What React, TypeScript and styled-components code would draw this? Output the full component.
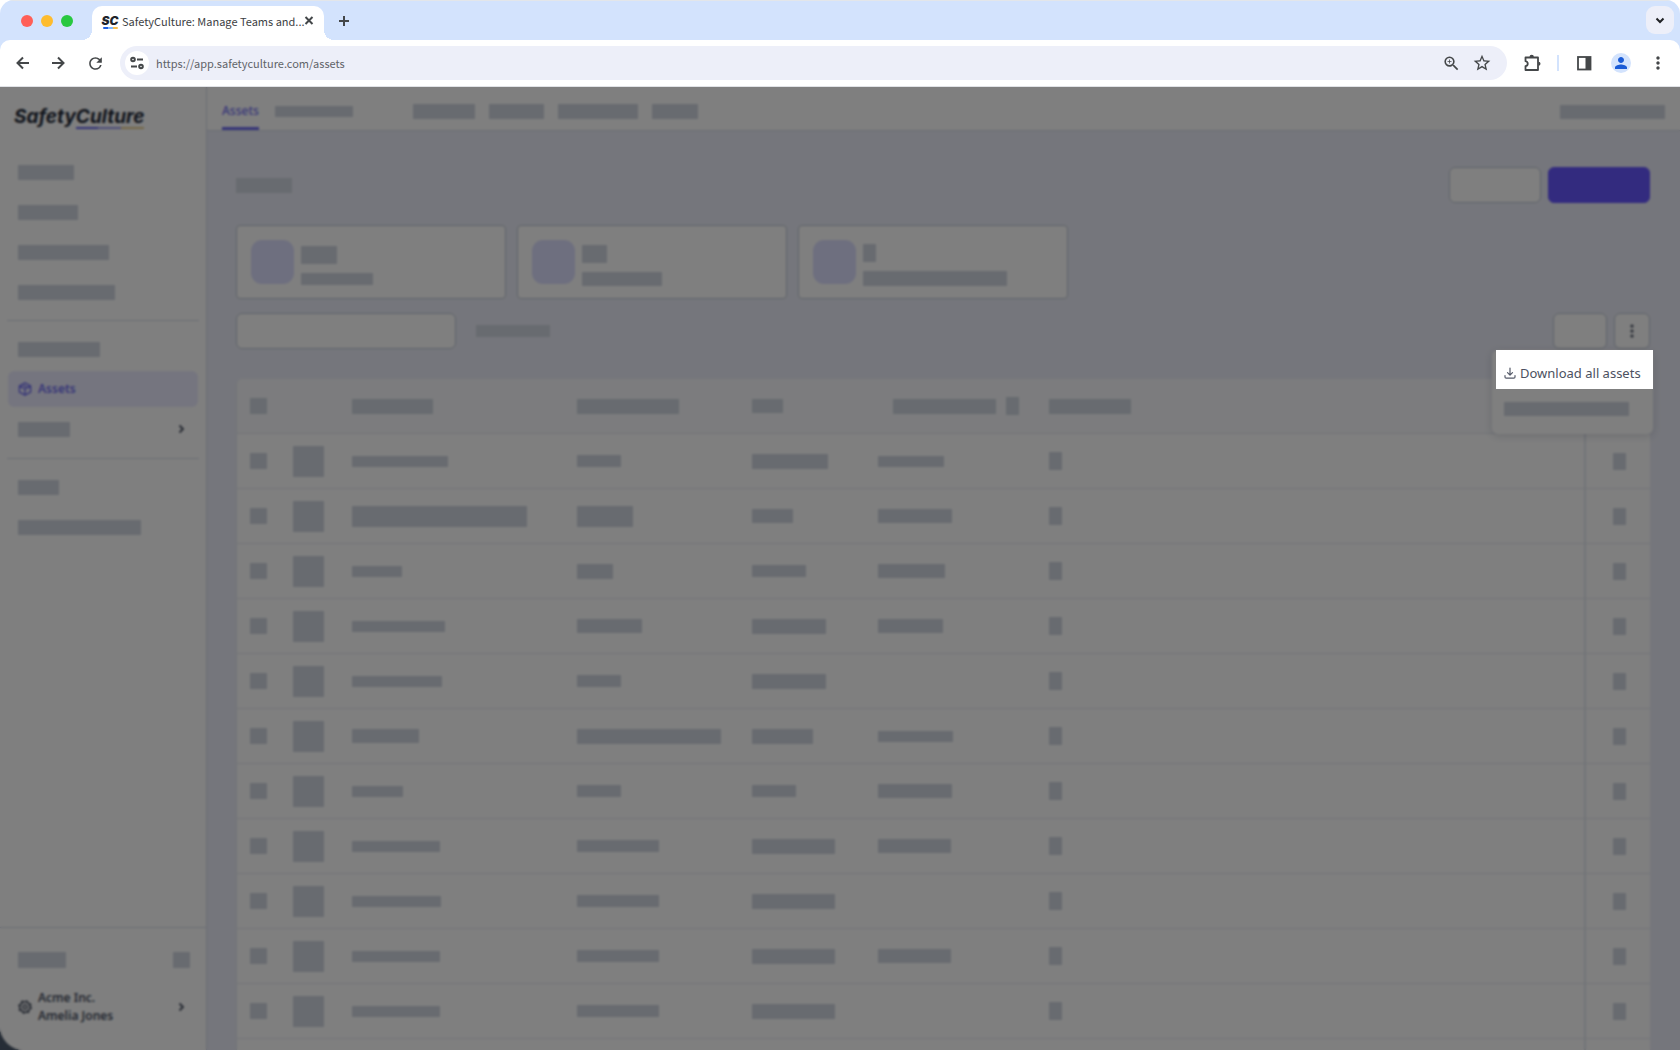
import React from "react";
import styled, { createGlobalStyle } from "styled-components";
import { MdRefresh, MdZoomIn, MdStarOutline, MdMoreVert, MdPerson } from "react-icons/md";

const color = {
  strip: "#d3e3fd",
  omnibox: "#edeff9",
  ink: "#444749",
  canvas: "#ebedf8",
  bar: "#d0d6e0",
  line: "#e4e8f0",
  edge: "#d6dbe8",
  outline: "#bec6d4",
  accent: "#6656ff",
  accentText: "#6e6cf0",
  tile: "#dcdefe",
  text: "#4a5263",
};

const GlobalStyle = createGlobalStyle`
  *, *::before, *::after { box-sizing: border-box; }
  body { margin: 0; background: #fff; overflow: hidden; }
  button, input { font: inherit; margin: 0; padding: 0; border: 0; }
  svg { display: block; flex: none; }
`;

const Window = styled.div`
  display: flex;
  flex-direction: column;
  height: 100vh;
  border-radius: 14px 14px 0 0;
  overflow: hidden;
  background: ${color.strip};
  font-family: "Noto Sans", sans-serif;
`;

/* Browser frame */

const TabStrip = styled.header`
  display: flex;
  align-items: flex-end;
  height: 40px;
  flex: none;
  padding: 0 6px 0 21px;
  border-top: 1px solid #e3e6ea;
`;

const Lights = styled.div`
  display: flex;
  gap: 8px;
  padding-bottom: 13px;
`;

const Light = styled.span<{ $fill: string }>`
  width: 12px;
  height: 12px;
  border-radius: 50%;
  background: ${(p) => p.$fill};
`;

const Tab = styled.div`
  position: relative;
  display: flex;
  align-items: center;
  width: 232px;
  height: 34px;
  margin-left: 19px;
  padding: 0 9px 4px 10px;
  border-radius: 10px 10px 0 0;
  background: #fff;

  &::before,
  &::after {
    content: "";
    position: absolute;
    bottom: 0;
    width: 10px;
    height: 10px;
  }
  &::before {
    right: 100%;
    background: radial-gradient(circle at 0 0, transparent 10px, #fff 10px);
  }
  &::after {
    left: 100%;
    background: radial-gradient(circle at 100% 0, transparent 10px, #fff 10px);
  }
`;

const Favicon = styled.span`
  display: flex;
  flex-direction: column;
  align-items: center;
  width: 16px;
  margin-top: 2px;
  font: italic 900 12px/12px Inter, sans-serif;
  color: #20242b;

  &::after {
    content: "";
    width: 15px;
    height: 2px;
    border-radius: 1px;
    background: linear-gradient(90deg, #1f5fe0 0 35%, #7fb8ff 35% 65%, #f5bd4f 65%);
  }
`;

const TabTitle = styled.span`
  flex: 1;
  min-width: 0;
  margin-left: 4px;
  font: 11px/16px "Noto Sans CJK JP", "Noto Sans", sans-serif;
  color: #3c4043;
  white-space: nowrap;
`;

const IconButton = styled.button<{ $size?: number }>`
  display: grid;
  place-items: center;
  flex: none;
  width: ${(p) => p.$size ?? 24}px;
  height: ${(p) => p.$size ?? 24}px;
  background: none;
  color: ${color.ink};
`;

const NewTab = styled(IconButton)`
  margin: 0 auto 7px 8px;
`;

const TabSearch = styled(IconButton)`
  margin-bottom: 6px;
  border-radius: 9px;
  background: ${color.omnibox};
  color: #202124;
`;

const Toolbar = styled.div`
  display: flex;
  align-items: center;
  gap: 13px;
  flex: none;
  height: 47px;
  padding: 0 10px 0 11px;
  border-radius: 10px 10px 0 0;
  border-bottom: 1px solid #e0e2e6;
  background: #fff;
`;

const History = styled.div`
  display: flex;
  gap: 12px;
`;

const Omnibox = styled.form`
  display: flex;
  align-items: center;
  gap: 7px;
  flex: 1;
  height: 34px;
  padding: 0 13px 0 5px;
  border-radius: 17px;
  background: ${color.omnibox};
`;

const SiteInfo = styled(IconButton)`
  border-radius: 50%;
  background: #fff;
`;

const Address = styled.input`
  flex: 1;
  min-width: 0;
  background: none;
  font: 11px/18px "Noto Sans CJK JP", "Noto Sans", sans-serif;
  color: #5f6368;
  outline: none;
`;

const ToolbarRule = styled.span`
  width: 2px;
  height: 16px;
  background: ${color.strip};
`;

const Profile = styled(IconButton)`
  margin: 0 2px;
  border-radius: 50%;
  background: ${color.strip};
  color: #1a5bd6;
`;

/* Application */

const Stage = styled.div`
  position: relative;
  flex: 1;
  min-height: 0;
  overflow: hidden;
  background: #4c5a6c;
`;

const AppFrame = styled.div`
  display: grid;
  grid-template-columns: 206px 1fr;
  grid-template-rows: minmax(0, 1fr);
  height: 100%;
  overflow: hidden;
  border-bottom-left-radius: 24px;
  background: ${color.canvas};
`;

const Dimmer = styled.div`
  position: absolute;
  inset: 0;
  z-index: 1;
  background: rgba(0, 0, 0, 0.5);
  backdrop-filter: blur(1px);
  pointer-events: none;
`;

const Bar = styled.span<{ $w: number; $h?: number }>`
  display: block;
  flex: none;
  width: ${(p) => p.$w}px;
  height: ${(p) => p.$h ?? 15}px;
  background: ${color.bar};
`;

const Sidebar = styled.aside`
  display: flex;
  flex-direction: column;
  min-height: 0;
  background: #fff;
`;

const Brand = styled.a`
  display: flex;
  flex-direction: column;
  align-items: flex-end;
  align-self: flex-start;
  height: 63px;
  padding: 19px 0 0 14px;
  font: italic 700 19px/21px Inter, sans-serif;
  color: #232a38;
  text-decoration: none;

  &::after {
    content: "";
    width: 68px;
    height: 2px;
    background: linear-gradient(90deg, #6262e8 0 32%, #9b9bf0 32% 66%, #e8cf8c 66%);
  }
`;

const NavGroup = styled.nav`
  display: flex;
  flex-direction: column;
  gap: 4px;
  padding: 4px 8px 10px;
  & + & {
    margin: 0 7px;
    padding: 10px 1px 11px;
    border-top: 1px solid ${color.edge};
  }
`;

const NavItem = styled.a<{ $active?: boolean }>`
  display: flex;
  align-items: center;
  gap: 6px;
  height: 36px;
  padding: 0 10px;
  border-radius: 6px;
  background: ${(p) => (p.$active ? "#ebebfe" : "none")};
  font-size: 12px;
  font-weight: 600;
  line-height: 18px;
  color: ${(p) => (p.$active ? color.accentText : color.text)};
  text-decoration: none;

  & > svg:last-child:not(:first-child) {
    margin-left: auto;
  }
`;

const Footer = styled.footer`
  flex: none;
  margin-top: auto;
  height: 123px;
  padding: 14px 8px 0;
  border-top: 1px solid ${color.edge};
`;

const FooterRow = styled.div`
  display: flex;
  align-items: center;
  justify-content: space-between;
  height: 36px;
  padding: 0 8px 0 10px;
`;

const Account = styled.button`
  display: flex;
  align-items: center;
  gap: 6px;
  width: 100%;
  height: 58px;
  padding: 0 10px;
  background: none;
  font-size: 12px;
  font-weight: 600;
  line-height: 18px;
  color: ${color.text};
  text-align: left;

  & > svg:last-child {
    margin-left: auto;
  }
`;

const Main = styled.main`
  min-width: 0;
  border-left: 1px solid ${color.edge};
`;

const TopBar = styled.div`
  display: flex;
  align-items: center;
  height: 44px;
  padding: 6px 15px 0 15px;
  border-bottom: 1px solid ${color.edge};
  background: #fff;
`;

const TopTab = styled.a`
  display: flex;
  align-items: center;
  align-self: stretch;
  margin-right: 16px;
  border-bottom: 3px solid ${color.accentText};
  font-size: 12px;
  font-weight: 500;
  color: ${color.accentText};
  text-decoration: none;
`;

const TopLinks = styled.div`
  display: flex;
  gap: 14px;
  margin: 0 auto 0 60px;
`;

const Content = styled.div`
  padding: 36px 30px 0 29px;
`;

const Heading = styled.div`
  display: flex;
  align-items: center;
  justify-content: space-between;
`;

const Actions = styled.div`
  display: flex;
  gap: 7px;
`;

const Action = styled.button<{ $w: number; $primary?: boolean }>`
  display: grid;
  place-items: center;
  width: ${(p) => p.$w}px;
  height: 36px;
  border: 1px solid ${(p) => (p.$primary ? color.accent : color.outline)};
  border-radius: 6px;
  background: ${(p) => (p.$primary ? color.accent : "#fff")};
  color: ${color.text};
`;

const Cards = styled.div`
  display: flex;
  gap: 11px;
  margin-top: 22px;
`;

const Card = styled.section`
  display: flex;
  align-items: center;
  gap: 7px;
  width: 270px;
  height: 74px;
  padding: 0 14px;
  border: 1px solid ${color.outline};
  border-radius: 4px;
  background: #fff;
`;

const CardTile = styled.span`
  width: 43px;
  height: 44px;
  border-radius: 11px;
  background: ${color.tile};
`;

const CardLines = styled.div`
  display: grid;
  gap: 9px;
  padding-top: 6px;
`;

const Filters = styled.div`
  display: flex;
  align-items: center;
  gap: 20px;
  margin-top: 14px;
`;

const Search = styled.input`
  width: 220px;
  height: 36px;
  border: 1px solid ${color.outline};
  border-radius: 6px;
  background: #fff;
`;

const FilterActions = styled(Actions)`
  position: relative;
  margin-left: auto;
`;

const Menu = styled.div`
  position: absolute;
  top: 37px;
  right: -3px;
  width: 161px;
  border-radius: 6px;
  background: #fff;
  box-shadow: 0 2px 8px rgba(40, 50, 80, 0.18);
`;

const MenuSpotlight = styled.button`
  position: relative;
  z-index: 2;
  display: flex;
  align-items: center;
  gap: 4px;
  width: 157px;
  height: 39px;
  margin-left: 4px;
  padding: 7px 0 0 8px;
  background: #fff;
  font-size: 13px;
  line-height: 18px;
  color: #4c5160;
  white-space: nowrap;
`;

const MenuRow = styled.div`
  padding: 13px 12px 18px;
`;

const Assets = styled.table`
  width: 100%;
  margin-top: 30px;
  border-spacing: 0;
  table-layout: fixed;
  border-left: 1px solid ${color.line};
  border-radius: 6px 6px 0 0;
  background: #fff;
`;

const Col = styled.col<{ $w?: number }>`
  width: ${(p) => (p.$w ? `${p.$w}px` : "auto")};
`;

const HeadCell = styled.th<{ $pad?: number }>`
  height: 55px;
  padding: 0 0 0 ${(p) => p.$pad ?? 0}px;
  border-bottom: 1px solid ${color.line};
  background: #f8f9fc;
  &:first-child {
    border-top-left-radius: 6px;
  }
`;

const Cell = styled.td<{ $pad?: number; $pinned?: boolean }>`
  height: 55px;
  padding: 0 0 0 ${(p) => p.$pad ?? 0}px;
  border-bottom: 1px solid ${color.line};
  border-left: ${(p) => (p.$pinned ? `2px solid ${color.line}` : "0")};
`;

const Inline = styled.div`
  display: flex;
  align-items: center;
  gap: 10px;
`;

type Size = [number, number];

const rows: (Size | null)[][] = [
  [[96, 11], [44, 12], [76, 15], [66, 11]],
  [[175, 21], [56, 21], [41, 14], [74, 14]],
  [[50, 11], [36, 15], [54, 12], [67, 14]],
  [[93, 11], [65, 14], [74, 15], [65, 14]],
  [[90, 11], [44, 12], [74, 15], null],
  [[67, 14], [144, 15], [61, 15], [75, 11]],
  [[51, 11], [44, 12], [44, 12], [74, 14]],
  [[88, 11], [82, 12], [83, 15], [73, 14]],
  [[89, 11], [82, 12], [83, 15], null],
  [[88, 11], [82, 12], [83, 15], [73, 14]],
  [[88, 11], [82, 12], [83, 15], null],
];

const cards: [Size, Size][] = [
  [[36, 18], [72, 12]],
  [[25, 18], [80, 14]],
  [[13, 18], [144, 15]],
];

const Glyph = ({ d, size = 18, width = 2 }: { d: string; size?: number; width?: number }) => (
  <svg width={size} height={size} viewBox={`0 0 ${size} ${size}`} fill="none" stroke="currentColor" strokeWidth={width}>
    <path d={d} />
  </svg>
);

const SettingsGlyph = () => (
  <svg width="14" height="14" viewBox="0 0 14 14" fill="none" stroke={color.ink} strokeWidth="2">
    <circle cx="3" cy="3.5" r="1.8" />
    <path d="M7 3.500h6M1 10.500h6" />
    <circle cx="11" cy="10.500" r="1.8" />
  </svg>
);

const PuzzleGlyph = () => (
  <svg width="20" height="20" viewBox="0 0 20 20">
    <path d="M3.500 4.500h12.500v12.500H3.500v-3.800c3-.6 3-4.400 0-5z" fill="none" stroke={color.ink} strokeWidth="1.800" strokeLinejoin="round" />
    <path d="M7.500 4a2.200 2.200 0 0 1 4.400 0zM16.500 8.800a2 2 0 0 1 0 4z" fill={color.ink} />
  </svg>
);

const PanelGlyph = () => (
  <svg width="16" height="16" viewBox="0 0 16 16">
    <rect x="2" y="2" width="12.500" height="12.500" fill="none" stroke={color.ink} strokeWidth="1.800" />
    <path d="M9.500 2h5v12.500h-5z" fill={color.ink} />
  </svg>
);

const CubeGlyph = () => (
  <svg width="14" height="14" viewBox="0 0 14 14" fill="none" stroke={color.accentText} strokeWidth="1.400" strokeLinejoin="round">
    <path d="M7 .8l5.600 3v6.400L7 13.200l-5.600-3V3.800zM1.400 3.800L7 7l5.600-3.200M7 7v6.200M4 2.400l5.800 3.200" />
  </svg>
);

const GearGlyph = () => (
  <svg width="14" height="14" viewBox="0 0 14 14" fill="none" stroke={color.text}>
    <circle cx="7" cy="7" r="5.200" strokeWidth="1.600" />
    <circle cx="7" cy="7" r="2" strokeWidth="1.400" />
    <circle cx="7" cy="7" r="6.300" strokeWidth="1.200" strokeDasharray="2.400 2.548" />
  </svg>
);

const DownloadGlyph = () => (
  <svg width="12" height="12" viewBox="0 0 12 12" fill="none" stroke="#545968" strokeWidth="1.200" strokeLinecap="round" strokeLinejoin="round">
    <path d="M6 1v7M3.500 5.700L6 8.200l2.500-2.500M1 8.500V10c0 .8.500 1.200 1.200 1.200h7.600c.7 0 1.200-.4 1.200-1.200V8.500" />
  </svg>
);

const KebabGlyph = () => (
  <svg width="4" height="14" viewBox="0 0 4 14" fill={color.text}>
    <circle cx="2" cy="2" r="1.600" />
    <circle cx="2" cy="7" r="1.600" />
    <circle cx="2" cy="12" r="1.600" />
  </svg>
);

const ChevronGlyph = () => <Glyph size={14} width={1.8} d="M5.500 3.500L9 7l-3.500 3.500" />;

function Browser() {
  return (
    <>
      <TabStrip>
        <Lights>
          <Light $fill="#ff5f57" />
          <Light $fill="#febc2e" />
          <Light $fill="#28c840" />
        </Lights>
        <Tab>
          <Favicon>SC</Favicon>
          <TabTitle>SafetyCulture: Manage Teams and...</TabTitle>
          <IconButton $size={12} aria-label="Close tab"><Glyph size={12} d="M2.500 2l7 7M9.500 2l-7 7" /></IconButton>
        </Tab>
        <NewTab aria-label="New tab"><Glyph size={12} d="M6 1v10M1 6h10" /></NewTab>
        <TabSearch $size={28} aria-label="Search tabs"><Glyph size={12} d="M2.500 4.500L6 8l3.500-3.500" /></TabSearch>
      </TabStrip>
      <Toolbar>
        <History>
          <IconButton aria-label="Back"><Glyph d="M15 9H4M9 3.500L3.500 9 9 14.500" /></IconButton>
          <IconButton aria-label="Forward"><Glyph d="M2 9h11M8 3.500L13.500 9 8 14.500" /></IconButton>
          <IconButton aria-label="Reload"><MdRefresh size={19} /></IconButton>
        </History>
        <Omnibox>
          <SiteInfo type="button" aria-label="Site information"><SettingsGlyph /></SiteInfo>
          <Address aria-label="Address" defaultValue="https://app.safetyculture.com/assets" />
          <IconButton type="button" aria-label="Zoom"><MdZoomIn size={19} /></IconButton>
          <IconButton type="button" aria-label="Bookmark"><MdStarOutline size={20} /></IconButton>
        </Omnibox>
        <IconButton aria-label="Extensions"><PuzzleGlyph /></IconButton>
        <ToolbarRule />
        <IconButton aria-label="Side panel"><PanelGlyph /></IconButton>
        <Profile $size={20} aria-label="Profile"><MdPerson size={18} /></Profile>
        <IconButton aria-label="Browser menu"><MdMoreVert size={20} /></IconButton>
      </Toolbar>
    </>
  );
}

function SideNav() {
  return (
    <Sidebar>
      <Brand href="#">SafetyCulture</Brand>
      <NavGroup>
        {[56, 60, 91, 97].map((w) => (
          <NavItem key={w} href="#"><Bar $w={w} /></NavItem>
        ))}
      </NavGroup>
      <NavGroup>
        <NavItem href="#"><Bar $w={82} /></NavItem>
        <NavItem href="#" $active><CubeGlyph />Assets</NavItem>
        <NavItem href="#"><Bar $w={52} /><ChevronGlyph /></NavItem>
      </NavGroup>
      <NavGroup>
        <NavItem href="#"><Bar $w={41} /></NavItem>
        <NavItem href="#"><Bar $w={123} /></NavItem>
      </NavGroup>
      <Footer>
        <FooterRow><Bar $w={48} $h={16} /><Bar $w={17} $h={16} /></FooterRow>
        <Account>
          <GearGlyph />
          <span>Acme Inc.<br />Amelia Jones</span>
          <ChevronGlyph />
        </Account>
      </Footer>
    </Sidebar>
  );
}

function AssetTable() {
  return (
    <Assets>
      <colgroup>
        <Col $w={56} /><Col $w={59} /><Col $w={225} /><Col $w={175} /><Col $w={126} /><Col $w={171} /><Col /><Col $w={66} />
      </colgroup>
      <thead>
        <tr>
          <HeadCell $pad={13}><Bar $w={17} $h={16} /></HeadCell>
          <HeadCell />
          <HeadCell><Bar $w={81} /></HeadCell>
          <HeadCell><Bar $w={102} /></HeadCell>
          <HeadCell><Bar $w={31} $h={14} /></HeadCell>
          <HeadCell $pad={15}><Inline><Bar $w={103} /><Bar $w={13} $h={18} /></Inline></HeadCell>
          <HeadCell><Bar $w={82} /></HeadCell>
          <HeadCell />
        </tr>
      </thead>
      <tbody>
        {rows.map((row, i) => (
          <tr key={i}>
            <Cell $pad={13}><Bar $w={17} $h={16} /></Cell>
            <Cell><Bar $w={31} $h={31} /></Cell>
            {row.map((size, j) => (
              <Cell key={j}>{size && <Bar $w={size[0]} $h={size[1]} />}</Cell>
            ))}
            <Cell><Bar $w={13} $h={18} /></Cell>
            <Cell $pinned $pad={27}><Bar $w={13} $h={17} /></Cell>
          </tr>
        ))}
        <tr>
          {Array.from({ length: 8 }, (_, i) => (
            <Cell key={i} $pinned={i === 7} />
          ))}
        </tr>
      </tbody>
    </Assets>
  );
}

export default function App() {
  return (
    <Window>
      <GlobalStyle />
      <Browser />
      <Stage>
        <AppFrame>
          <SideNav />
          <Main>
            <TopBar>
              <TopTab href="#">Assets</TopTab>
              <Bar $w={78} $h={11} />
              <TopLinks>
                <Bar $w={62} /><Bar $w={55} /><Bar $w={80} /><Bar $w={46} />
              </TopLinks>
              <Bar $w={105} $h={14} />
            </TopBar>
            <Content>
              <Heading>
                <Bar $w={56} />
                <Actions>
                  <Action $w={92} aria-label="Secondary action" />
                  <Action $w={102} $primary aria-label="Primary action" />
                </Actions>
              </Heading>
              <Cards>
                {cards.map(([top, bottom], i) => (
                  <Card key={i}>
                    <CardTile />
                    <CardLines>
                      <Bar $w={top[0]} $h={top[1]} />
                      <Bar $w={bottom[0]} $h={bottom[1]} />
                    </CardLines>
                  </Card>
                ))}
              </Cards>
              <Filters>
                <Search aria-label="Search" />
                <Bar $w={74} $h={12} />
                <FilterActions>
                  <Action $w={54} aria-label="View" />
                  <Action $w={36} aria-label="More options"><KebabGlyph /></Action>
                  <Menu>
                    <MenuSpotlight><DownloadGlyph />Download all assets</MenuSpotlight>
                    <MenuRow><Bar $w={125} $h={14} /></MenuRow>
                  </Menu>
                </FilterActions>
              </Filters>
              <AssetTable />
            </Content>
          </Main>
        </AppFrame>
        <Dimmer />
      </Stage>
    </Window>
  );
}
